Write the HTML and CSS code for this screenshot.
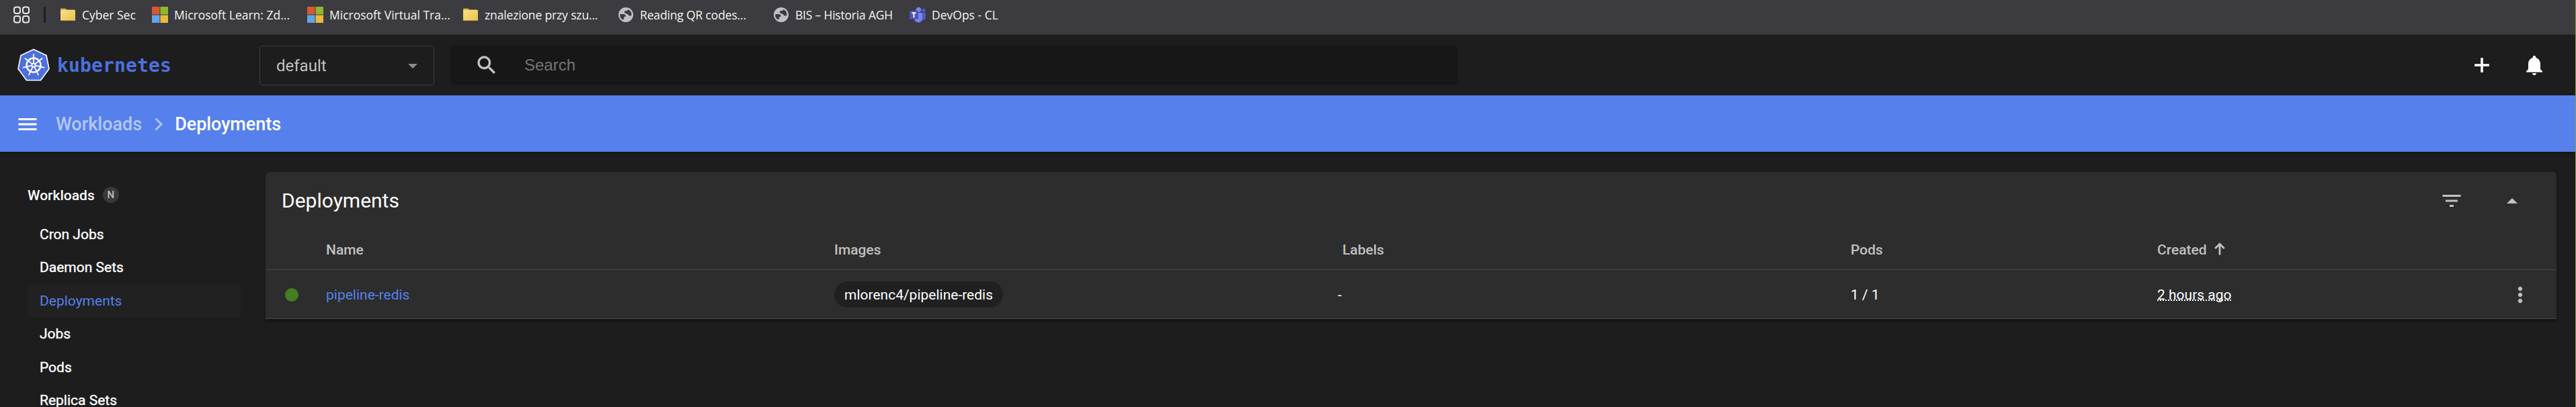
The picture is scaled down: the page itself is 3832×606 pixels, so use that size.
FILE: index.html
```html
<!DOCTYPE html>
<html lang="en">
<head>
<meta charset="utf-8">
<title>Kubernetes Dashboard</title>
<link rel="stylesheet" href="styles.css">
</head>
<body>
<div class="page">
  <div class="bookmarks">
    <svg class="apps" viewBox="0 0 24 26" width="24" height="26" fill="none" stroke="#e8e8ea" stroke-width="2"><rect x="1" y="1.500" width="9" height="9.500" rx="3"/><rect x="14" y="1.500" width="9" height="9.500" rx="3"/><rect x="1" y="15" width="9" height="9.500" rx="3"/><rect x="14" y="15" width="9" height="9.500" rx="3"/></svg>
    <span class="divider"></span>
    <span class="bm bm-1"><svg width="24" height="24" viewBox="0 0 24 24"><use href="#folder"/></svg><span>Cyber Sec</span></span>
    <span class="bm bm-2"><svg width="24" height="24" viewBox="0 0 24 24"><use href="#ms"/></svg><span>Microsoft Learn: Zd...</span></span>
    <span class="bm bm-3"><svg width="24" height="24" viewBox="0 0 24 24"><use href="#ms"/></svg><span>Microsoft Virtual Tra...</span></span>
    <span class="bm bm-4"><svg width="24" height="24" viewBox="0 0 24 24"><use href="#folder"/></svg><span>znalezione przy szu...</span></span>
    <span class="bm bm-5"><svg width="24" height="24" viewBox="0 0 24 24"><use href="#globe"/></svg><span>Reading QR codes...</span></span>
    <span class="bm bm-6"><svg width="24" height="24" viewBox="0 0 24 24"><use href="#globe"/></svg><span>BIS – Historia AGH</span></span>
    <span class="bm bm-7"><svg width="24" height="24" viewBox="0 0 24 24"><circle cx="13.500" cy="4.500" r="3.800" fill="#7b83eb"/><circle cx="21" cy="5.500" r="2.700" fill="#5059c9"/><path d="M16 9h8v7a4 4 0 0 1-6 3.500z" fill="#5059c9"/><path d="M8 9h11v8a6 6 0 0 1-12 1z" fill="#7b83eb"/><rect x="0" y="6" width="13" height="12.500" rx="1" fill="#4b53bc"/><path d="M3.500 9.300h6M6.500 9.300v7" stroke="#fff" stroke-width="1.900"/></svg><span>DevOps - CL</span></span>
  </div>

  <header class="topbar">
    <svg class="logo" width="48" height="50" viewBox="0 0 48 50">
      <path d="M24 1.500 43 10.500 47 30.500 34.500 47.500h-21L1 30.500 5 10.500z" fill="#4d70dd" stroke="#fff" stroke-width="1.600" stroke-linejoin="round"/>
      <g stroke="#fff" fill="none" stroke-linecap="round">
        <circle cx="24" cy="25" r="10.500" stroke-width="2.400"/>
        <g stroke-width="1.800"><path id="sp" d="M24 22V9"/><use href="#sp" transform="rotate(51.430 24 25)"/><use href="#sp" transform="rotate(102.860 24 25)"/><use href="#sp" transform="rotate(154.290 24 25)"/><use href="#sp" transform="rotate(205.710 24 25)"/><use href="#sp" transform="rotate(257.140 24 25)"/><use href="#sp" transform="rotate(308.570 24 25)"/></g>
        <circle cx="24" cy="25" r="2.600" stroke-width="1.800"/>
      </g>
    </svg>
    <span class="wordmark">kubernetes</span>
    <div class="namespace"><span>default</span><i class="caret"></i></div>
    <div class="search"><svg width="36" height="36" viewBox="0 0 24 24" fill="#c4c4c4" stroke="#c4c4c4" stroke-width=".3"><path d="M15.500 14h-.79l-.28-.27A6.471 6.471 0 0 0 16 9.500 6.500 6.500 0 1 0 9.500 16c1.610 0 3.090-.59 4.230-1.570l.27.28v.79l5 4.990L20.490 19l-4.990-5zm-6 0C7.010 14 5 11.990 5 9.500S7.010 5 9.500 5 14 7.010 14 9.500 11.990 14 9.500 14z"/></svg><span>Search</span></div>
    <svg class="plus" width="36" height="36" viewBox="0 0 24 24" fill="#fff" stroke="#fff" stroke-width=".4"><path d="M19 13h-6v6h-2v-6H5v-2h6V5h2v6h6v2z"/></svg>
    <svg class="bell" width="36" height="36" viewBox="0 0 24 24" fill="#fff"><path d="M12 22c1.100 0 2-.9 2-2h-4c0 1.100.89 2 2 2zm6-6v-5c0-3.070-1.640-5.640-4.500-6.320V4c0-.83-.67-1.500-1.500-1.500s-1.500.67-1.500 1.500v.68C7.630 5.360 6 7.920 6 11v5l-2 2v1h16v-1l-2-2z"/></svg>
  </header>

  <nav class="crumbs">
    <svg width="36" height="36" viewBox="0 0 24 24" fill="#fff"><path d="M3 18h18v-2H3v2zm0-5h18v-2H3v2zm0-7v2h18V6H3z"/></svg>
    <span class="parent">Workloads</span>
    <svg class="chev" width="12" height="20" viewBox="0 0 12 20" fill="none" stroke="#b5c7f7" stroke-width="2.800"><path d="M1.500 1.500 10 10l-8.500 8.500"/></svg>
    <span class="current">Deployments</span>
  </nav>

  <main class="body">
    <aside class="side">
      <div class="side-title"><span>Workloads</span><b>N</b></div>
      <a>Cron Jobs</a><a>Daemon Sets</a><a class="active">Deployments</a><a>Jobs</a><a>Pods</a><a>Replica Sets</a>
    </aside>
    <section class="card">
      <div class="card-head">
        <h1>Deployments</h1>
        <svg class="filter" width="36" height="36" viewBox="0 0 24 24" fill="#c1c1c1"><path d="M10 18h4v-2h-4v2zM3 6v2h18V6H3zm3 7h12v-2H6v2z"/></svg>
        <i class="fold"></i>
      </div>
      <div class="row head">
        <span></span><span>Name</span><span>Images</span><span>Labels</span><span>Pods</span>
        <span class="sort">Created<svg width="16" height="19" viewBox="0 0 16 19" fill="none" stroke="#c1c1c1" stroke-width="2.800"><path d="M8 18.500V2M1.200 9 8 2.300 14.800 9"/></svg></span><span></span>
      </div>
      <div class="row data">
        <span class="status"><i></i></span><span class="link">pipeline-redis</span><span><em>mlorenc4/pipeline-redis</em></span><span class="dash">-</span><span>1 / 1</span>
        <span><u>2 hours ago</u></span>
        <span class="menu"><svg width="36" height="36" viewBox="0 0 24 24" fill="#c1c1c1" stroke="#c1c1c1" stroke-width=".3"><path d="M12 8c1.100 0 2-.9 2-2s-.9-2-2-2-2 .9-2 2 .9 2 2 2zm0 2c-1.100 0-2 .9-2 2s.9 2 2 2 2-.9 2-2-.9-2-2-2zm0 6c-1.100 0-2 .9-2 2s.9 2 2 2 2-.9 2-2-.9-2-2-2z"/></svg></span>
      </div>
    </section>
  </main>
</div>

<svg class="defs" width="0" height="0">
  <defs>
    <linearGradient id="fg" x1="0" y1="0" x2="1" y2="1"><stop offset="0" stop-color="#f8e18a"/><stop offset="1" stop-color="#ecc04c"/></linearGradient>
    <g id="folder"><path d="M1 3.500Q1 2.500 2 2.500h6.500l2 2.500H22v5H1z" fill="#d3a23a"/><rect x="1" y="4.500" width="22" height="16.500" rx="1.500" fill="url(#fg)"/><path d="M1.500 20.600h21" stroke="#b98d2c"/></g>
    <g id="ms"><path d="M0 0h11.500v11.500H0z" fill="#d9582f"/><path d="M12.500 0H24v11.500H12.500z" fill="#8fb832"/><path d="M0 12.500h11.500V24H0z" fill="#5fa5e8"/><path d="M12.500 12.500H24V24H12.500z" fill="#edb83d"/></g>
    <g id="globe"><circle cx="12" cy="12" r="11" fill="#bdc1c6"/><path d="M3.300 11h4.500c2.600 0 4.200 1.500 4.200 3.700h-2.700v2.500c0 .8-.6 1.300-1.400 1.300v1.300A8.800 8.800 0 0 1 3.300 11zM15.500 3.900A8.800 8.800 0 0 1 20.600 12c-.6 1.300-1.800 1.900-3.200 1.500-2-.5-2.200-2.600-4-2.900-2.300-.3-3.800-1.200-3.500-3 .2-1.200 1.300-1.600 2.600-1.700 1.500-.1 2.600-.6 3-2z" fill="#3c3b3f"/></g>
  </defs>
</svg>
</body>
</html>
```
FILE: styles.css
```css
* { box-sizing: border-box; }
body { margin: 0; background: #1d1d1d; font-family: Roboto, sans-serif; font-size: 21px; color: #fff; }
.page { width: 3832px; height: 606px; overflow: hidden; border-right: 1px solid #7da23a; display: flex; flex-direction: column; }
.defs { display: block; }
svg { display: block; flex: none; }
span, a { white-space: nowrap; }

.bookmarks { height: 52px; flex: none; background: #3c3b3f; border-bottom: 2px solid #343337; display: flex; align-items: flex-start; padding: 9px 0 0 20px; font-family: "Open Sans", sans-serif; font-size: 17.5px; color: #f4f4f4; }
.divider { width: 3px; height: 24px; background: #1f1f21; margin: 1px 21px 0; border-radius: 1px; }
.bm { display: flex; gap: 9px; height: 26px; line-height: 26px; padding-top: 1px; }
.bm span { margin-top: -1px; }
.bm-1 { width: 137px; }
.bm-2 { width: 231px; }
.bm-3 { width: 231px; }
.bm-4 { width: 231px; }
.bm-5 { width: 231px; }
.bm-6 { width: 203px; }
.bm-4 > span { letter-spacing: -.15px; }
.bm-5 > span { letter-spacing: -.15px; }
.bm-6 > span { letter-spacing: -.2px; }

.topbar { height: 90px; flex: none; display: flex; align-items: center; background: #1d1d1d; padding-left: 26px; }
.wordmark { font-family: "DejaVu Sans Mono", monospace; font-weight: bold; font-size: 28px; letter-spacing: .15px; color: #4d70dd; width: 175px; margin-left: 11px; }
.namespace { margin-left: 126px; width: 260px; height: 59px; border: 1px solid #3c3c3c; border-radius: 4px; display: flex; align-items: center; justify-content: space-between; padding: 2px 24px 0; font-size: 24px; color: #c1c1c1; }
.caret { border: 7px solid transparent; border-top-color: #8d8d8d; border-bottom: 0; }
.search { margin-left: 24px; width: 1498px; height: 58px; background: #171717; border-radius: 4px; display: flex; align-items: center; padding-left: 36px; font-family: "Liberation Sans", Arial, sans-serif; font-size: 24px; color: #757575; gap: 38px; }
.plus { margin-left: 1506px; }
.bell { margin-left: 42px; }

.crumbs { height: 84px; flex: none; background: #5680ec; display: flex; align-items: center; padding: 2px 0 0 23px; font-size: 27px; font-weight: 500; box-shadow: 0 2px 5px rgba(0,0,0,.35); }
.parent { color: #b5c7f7; margin-left: 24px; }
.chev { margin: 0 18px 0 19px; }
.current { letter-spacing: -.05px; }

.body { flex: 1; display: flex; padding-top: 30px; }
.side { width: 395px; flex: none; padding: 20px 36px 0 41px; }
.side-title { display: flex; align-items: center; gap: 12px; height: 30px; margin-bottom: 19px; font-weight: 500; }
.side-title b { width: 24px; height: 24px; margin-top: -2px; border-radius: 50%; background: #393939; color: #c1c1c1; font-size: 15px; font-weight: 500; line-height: 25px; text-align: center; }
.side a { display: block; height: 48px; line-height: 48px; margin-bottom: 1.400px; padding-left: 18px; border-radius: 4px; -webkit-text-stroke: .35px currentColor; }
.side .active { background: #212121; color: #5680ec; -webkit-text-stroke: 0; }

.card { width: 3408px; height: 219px; background: #2d2d2d; border-radius: 6px 6px 0 0; box-shadow: 0 3px 4px rgba(0,0,0,.4); }
.card-head { height: 86px; display: flex; align-items: center; padding-left: 24px; }
h1 { margin: -2px 0 0; flex: 1; font-size: 30px; font-weight: 400; }
.filter { margin-right: 64px; }
.fold { border: 8px solid transparent; border-bottom-color: #c1c1c1; border-top: 0; margin-right: 58px; }
.row { display: grid; grid-template-columns: 90px 756px 756px 756px 456px 522px 1fr; align-items: center; border-bottom: 1px solid #484848; }
.head { height: 60px; color: #c1c1c1; font-weight: 500; }
.data { height: 73px; padding-top: 1px; }
.sort { display: flex; align-items: center; gap: 11px; }
.sort svg { margin-top: -3px; }
.status { padding-left: 29px; }
.status i { display: block; width: 20px; height: 20px; border-radius: 50%; background: #437f20; }
.link { color: #5680ec; }
em { font-style: normal; display: inline-block; height: 39px; line-height: 40px; padding: 0 15px; border-radius: 20px; background: #202020; }
.dash { margin-left: -7px; }
u { text-decoration: underline dotted 2px; text-underline-offset: 1px; text-decoration-skip-ink: none; }
```
